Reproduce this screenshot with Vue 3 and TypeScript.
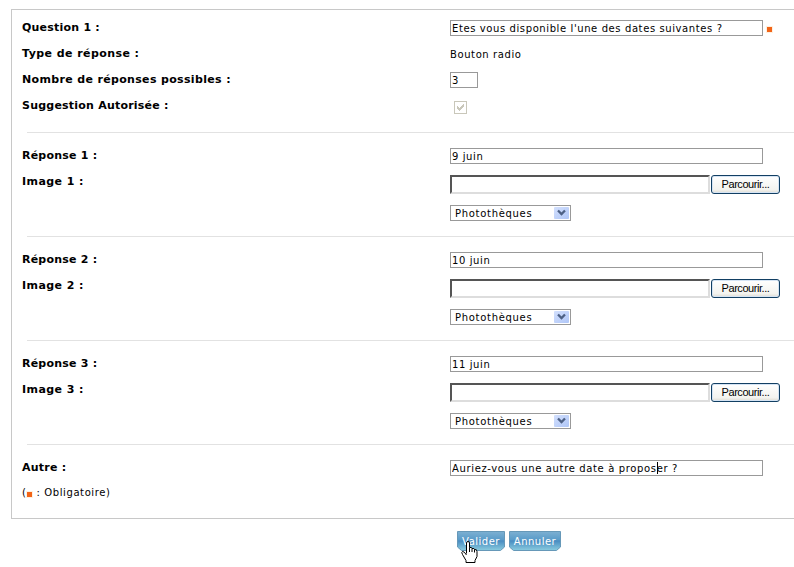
<script setup lang="ts">
import { ref } from 'vue'

const question = ref("Etes vous disponible l'une des dates suivantes ?")
const count = ref('3')
const answers = ref(['9 juin', '10 juin', '11 juin'])
const other = ref('Auriez-vous une autre date à proposer ?')
</script>

<template>
  <form class="page" @submit.prevent>
    <div class="panel">
      <div class="row">
        <label class="label">Question 1 :</label>
        <div class="control">
          <input v-model="question" class="field wide" type="text" />
          <i class="mark after-field"></i>
        </div>
      </div>
      <div class="row">
        <span class="label loose">Type de réponse :</span>
        <div class="control"><span class="plain">Bouton radio</span></div>
      </div>
      <div class="row">
        <label class="label medium">Nombre de réponses possibles :</label>
        <div class="control"><input v-model="count" class="field small" type="text" /></div>
      </div>
      <div class="row">
        <span class="label">Suggestion Autorisée :</span>
        <div class="control">
          <span class="check">
            <svg width="13" height="13" viewBox="0 0 13 13" shape-rendering="crispEdges">
              <path d="M3 5h1v1h1v1h1v-1h1v-1h1v-1h1v-1h1v3h-1v1h-1v1h-1v1h-1v1h-1v-1h-1v-1h-1z" fill="#c9c7ba" />
            </svg>
          </span>
        </div>
      </div>

      <template v-for="(_, i) in answers" :key="i">
        <div class="rule"></div>
        <div class="row">
          <label class="label">Réponse {{ i + 1 }} :</label>
          <div class="control"><input v-model="answers[i]" class="field wide answer" type="text" /></div>
        </div>
        <div class="row image-row">
          <label class="label loose">Image {{ i + 1 }} :</label>
          <div class="stack">
            <div class="file">
              <div class="file-path"></div>
              <button class="browse" type="button"><span>Parcourir...</span></button>
            </div>
            <div class="select">
              <span>Photothèques</span>
              <svg class="arrow" width="15" height="12" viewBox="0 0 15 12">
                <defs>
                  <linearGradient :id="'arrow' + i" x1="0" y1="0" x2="1" y2="1">
                    <stop offset="0" stop-color="#d3e0fd" />
                    <stop offset="1" stop-color="#afc6f7" />
                  </linearGradient>
                </defs>
                <rect width="15" height="12" rx="1" :fill="`url(#arrow${i})`" />
                <path d="M4 3.5l3.5 3.5L11 3.5" fill="none" stroke="#4d6185" stroke-width="2.3" />
              </svg>
            </div>
          </div>
        </div>
      </template>

      <div class="rule"></div>
      <div class="row">
        <label class="label">Autre :</label>
        <div class="control">
          <input v-model="other" class="field wide other" type="text" />
          <i class="caret"></i>
        </div>
      </div>
      <div class="legend"><span>(</span><i class="mark"></i><span class="legend-text">: Obligatoire)</span></div>
    </div>

    <div class="actions">
      <button class="action" type="submit">
        <svg width="48" height="20" viewBox="0 0 48 20">
          <defs>
            <linearGradient id="blue" x1="0" y1="0" x2="0" y2="1">
              <stop offset="0" stop-color="#7db0d2" />
              <stop offset=".42" stop-color="#5b9cc9" />
              <stop offset=".5" stop-color="#4a8dc2" />
              <stop offset="1" stop-color="#8accdf" />
            </linearGradient>
          </defs>
          <path d="M.5.5h47v15.5l-4 3.5h-39l-4-3.5z" fill="url(#blue)" stroke="#6698b8" />
        </svg>
        <span>Valider</span>
      </button>
      <button class="action" type="button">
        <svg width="52" height="20" viewBox="0 0 52 20">
          <path d="M.5.5h51v15.5l-4 3.5h-43l-4-3.5z" fill="url(#blue)" stroke="#6698b8" />
        </svg>
        <span>Annuler</span>
      </button>
      <svg class="pointer" width="17" height="22" viewBox="0 0 17 22">
        <path
          d="M5.500 12.500V2q0-1.500 1.500-1.500T8.500 2v4.500q2.500-.5 2.500 1 2.500-.5 2.500 1 2.500-.5 2.500 2v5l-2 4v2h-9v-2L1.500 13.500q-1.500-2.500 0-3t4 3.500"
          fill="#fff" stroke="#000"
        />
        <path d="M8.500 6.500v4.500M11 7.500v3.500M13.500 8.500v3" stroke="#000" fill="none" />
      </svg>
    </div>
  </form>
</template>

<style>
body {
  background: #fff;
  overflow: hidden;
}
</style>

<style scoped>
.page {
  box-sizing: border-box;
  width: 810px;
  height: 567px;
  padding: 9px 0 0 11px;
  overflow: hidden;
  color: #000;
  font-family: "DejaVu Sans", Verdana, sans-serif;
  font-size: 10px;
  letter-spacing: 0.6px;
}
.panel {
  box-sizing: border-box;
  height: 510px;
  padding: 4px 0 0 10px;
  border: 1px solid #c8c8c8;
}
.row {
  display: grid;
  grid-template-columns: 428px 1fr;
  height: 26px;
}
.image-row {
  height: 54px;
}
.label {
  height: 26px;
  font-size: 11px;
  font-weight: 700;
  line-height: 28px;
  letter-spacing: 0.22px;
  white-space: nowrap;
}
.label.medium {
  letter-spacing: 0.34px;
}
.label.loose {
  letter-spacing: 0.43px;
}
.control {
  position: relative;
  display: flex;
  align-items: flex-start;
  padding-top: 6px;
}
.field {
  box-sizing: border-box;
  height: 16px;
  margin: 0;
  padding: 1px 1px 0;
  border: 1px solid #999;
  border-radius: 0;
  outline: 0;
  background: #fff;
  color: #000;
  font: inherit;
  line-height: 13px;
  letter-spacing: inherit;
}
.wide {
  width: 313px;
}
.small {
  width: 28px;
}
.other {
  letter-spacing: 0.64px;
}
.mark {
  width: 5px;
  height: 5px;
  background: #f26417;
  box-shadow: 0 0 0 1px #fff0df;
}
.after-field {
  margin: 7px 0 0 4px;
}
.plain {
  margin-top: 2px;
  line-height: 14px;
}
.check {
  box-sizing: border-box;
  width: 13px;
  height: 13px;
  margin: 3px 0 0 4px;
  border: 1px solid #c9c7ba;
}
.check svg {
  display: block;
  margin: -1px;
}
.rule {
  height: 1px;
  margin: 14px 0 9px 5px;
  background: #e2e2e2;
}
.stack {
  display: flex;
  flex-direction: column;
  gap: 10px;
  padding-top: 7px;
}
.file {
  display: flex;
  gap: 1px;
  height: 20px;
}
.file-path {
  box-sizing: border-box;
  width: 260px;
  height: 19px;
  border: 2px solid;
  border-color: #555 #ddd #ddd #555;
}
.browse {
  box-sizing: border-box;
  width: 69px;
  height: 19px;
  padding: 0;
  border: 1px solid #123f63;
  border-radius: 3px;
  background: linear-gradient(#fff, #f3f3ef 80%, #dedbd2);
  box-shadow: inset 0 0 0 1px #d5e4f4;
  color: #000;
  font: 11px/17px "Liberation Sans", Arial, sans-serif;
  letter-spacing: -0.45px;
}
.browse span {
  display: block;
}
.select {
  box-sizing: border-box;
  display: flex;
  justify-content: space-between;
  width: 121px;
  height: 16px;
  padding: 1px 1px 1px 4px;
  border: 1px solid #999;
  line-height: 14px;
  letter-spacing: 0.7px;
}
.legend {
  display: flex;
  align-items: center;
  height: 25px;
  line-height: 25px;
}
.legend .mark {
  margin: 3px 0 0 0.5px;
}
.legend-text {
  margin-left: 4.5px;
}
.caret {
  position: absolute;
  left: 207px;
  top: 8px;
  width: 1px;
  height: 12px;
  background: #000;
}
.actions {
  position: relative;
  display: flex;
  gap: 4px;
  padding: 12px 0 0 446px;
}
.action {
  display: grid;
  padding: 0;
  border: 0;
  background: none;
  color: #fff;
  font: inherit;
  letter-spacing: 0.5px;
}
.action > * {
  grid-area: 1 / 1;
}
.action span {
  line-height: 21px;
}
.pointer {
  position: absolute;
  left: 450px;
  top: 22px;
}
</style>
